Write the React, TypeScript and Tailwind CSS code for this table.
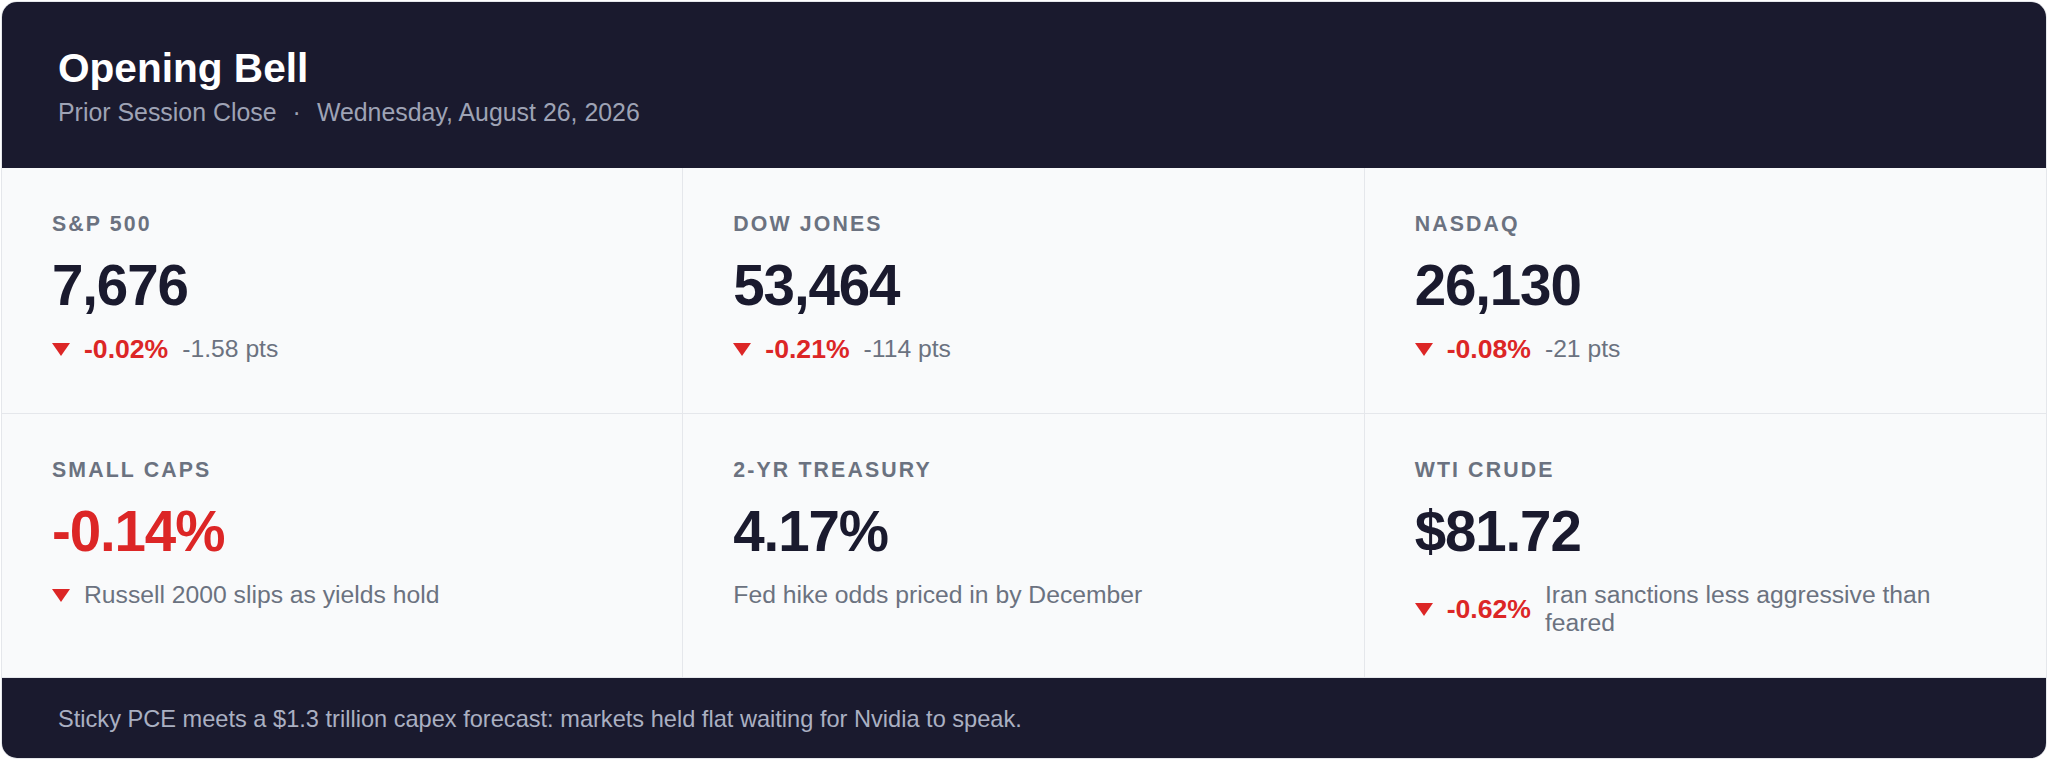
import React from "react";

type Cell = {
  label: string;
  value: string;
  negative?: boolean;
  pct?: string;
  note?: string;
  down?: boolean;
};

const rows: Cell[][] = [
  [
    { label: "S&P 500", value: "7,676", down: true, pct: "-0.02%", note: "-1.58 pts" },
    { label: "DOW JONES", value: "53,464", down: true, pct: "-0.21%", note: "-114 pts" },
    { label: "NASDAQ", value: "26,130", down: true, pct: "-0.08%", note: "-21 pts" },
  ],
  [
    { label: "SMALL CAPS", value: "-0.14%", negative: true, down: true, note: "Russell 2000 slips as yields hold" },
    { label: "2-YR TREASURY", value: "4.17%", note: "Fed hike odds priced in by December" },
    { label: "WTI CRUDE", value: "$81.72", down: true, pct: "-0.62%", note: "Iran sanctions less aggressive than feared" },
  ],
];

function DownArrow() {
  return (
    <svg width="18" height="13" viewBox="0 0 18 13" className="shrink-0">
      <polygon points="0,0 18,0 9,13" fill="#dc2626" />
    </svg>
  );
}

function Stat({ cell, last, pb }: { cell: Cell; last: boolean; pb: string }) {
  return (
    <div className={`pl-[50px] pr-[50px] pt-[42px] border-b border-[#e5e7eb] ${pb} ${last ? "" : "border-r"}`}>
      <div className="text-[21.3px] leading-[28px] font-bold tracking-[0.1em] text-[#6b7280]">{cell.label}</div>
      <div
        className={`mt-5 text-[56.5px] leading-[56px] font-bold tracking-[-0.02em] ${
          cell.negative ? "text-[#dc2626]" : "text-[#1a1a2e]"
        }`}
      >
        {cell.value}
      </div>
      <div className="mt-[21px] flex items-center gap-[14px]">
        {cell.down && <DownArrow />}
        {cell.pct && (
          <span className="shrink-0 text-[26.6px] leading-[28px] font-bold text-[#dc2626]">{cell.pct}</span>
        )}
        {cell.note && <span className="text-[24.7px] leading-[28px] text-[#6b7280]">{cell.note}</span>}
      </div>
    </div>
  );
}

export default function App() {
  return (
    <div className="p-px bg-white font-['Liberation_Sans',Arial,sans-serif]">
      <div className="overflow-hidden rounded-2xl border border-[#e5e7eb] bg-[#f9fafb]">
        <div className="bg-[#1a1a2e] px-14 pt-[42px] pb-10">
          <h1 className="text-[40.6px] leading-[48px] font-bold text-white">Opening Bell</h1>
          <div className="mt-1 text-[24.9px] leading-[32px] text-[#9ea3b5]">
            Prior Session Close<span className="mx-4">·</span>Wednesday, August 26, 2026
          </div>
        </div>
        <div className="grid grid-cols-3">
          {rows[0].map((c, i) => (
            <Stat key={c.label} cell={c} last={i === 2} pb="pb-[50px]" />
          ))}
          {rows[1].map((c, i) => (
            <Stat key={c.label} cell={c} last={i === 2} pb="pb-10" />
          ))}
        </div>
        <div className="bg-[#1a1a2e] px-14 pt-[25px] pb-[23px] text-[23.6px] leading-[32px] text-[#aab0c2]">
          Sticky PCE meets a $1.3 trillion capex forecast: markets held flat waiting for Nvidia to speak.
        </div>
      </div>
    </div>
  );
}
